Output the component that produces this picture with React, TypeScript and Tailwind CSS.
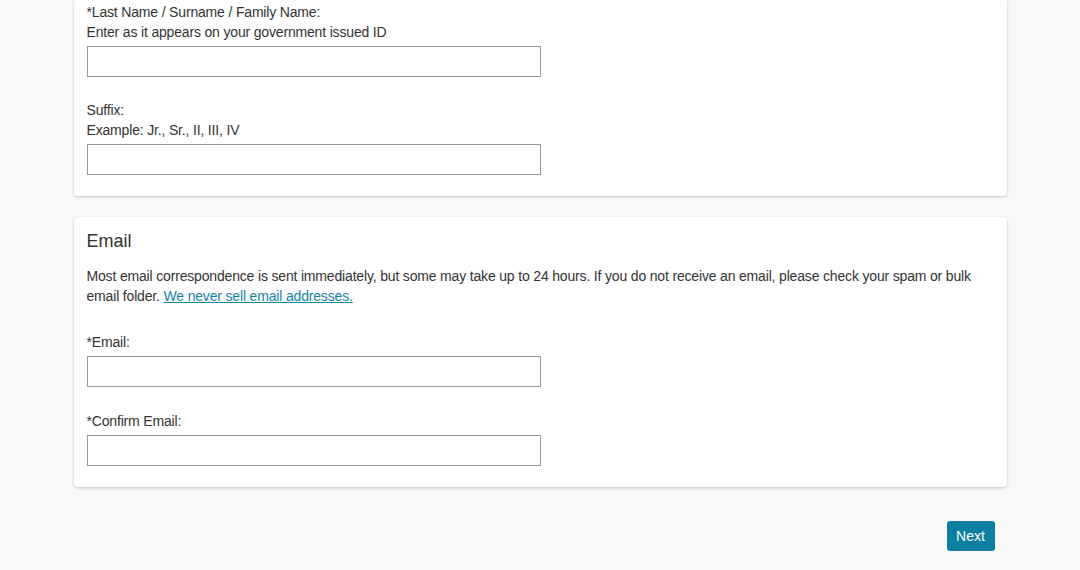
import React from 'react';

const Field: React.FC<{ label: string; hint?: string; className?: string }> = ({ label, hint, className = '' }) => (
  <div className={className}>
    <label className="block leading-5">{label}</label>
    {hint && <p className="leading-5">{hint}</p>}
    <input
      type="text"
      className="mt-1 block h-[31px] w-[454px] border border-[#999] bg-white px-2 text-sm outline-none"
    />
  </div>
);

const App: React.FC = () => {
  return (
    <div
      className="min-h-screen bg-[#f8f8f8] text-[14px] tracking-[-0.17px] text-[#333]"
      style={{ fontFamily: '"Liberation Sans", Arial, sans-serif' }}
    >
      <div className="mx-auto w-[933px]">
        {/* name card, top scrolled off */}
        <section className="rounded-b bg-white px-[13px] pt-[2px] pb-[21px] shadow-[0_1px_3px_rgba(0,0,0,0.22)]">
          <Field
            label="*Last Name / Surname / Family Name:"
            hint="Enter as it appears on your government issued ID"
          />
          <Field className="mt-[23px]" label="Suffix:" hint="Example: Jr., Sr., II, III, IV" />
        </section>

        <section className="mt-[21px] rounded bg-white px-[13px] pt-[13px] pb-[21px] shadow-[0_1px_3px_rgba(0,0,0,0.22)]">
          <h2 className="text-[18px] leading-[22px] tracking-normal">Email</h2>
          <p className="mt-[14px] leading-5">
            Most email correspondence is sent immediately, but some may take up to 24 hours. If you do not receive an
            email, please check your spam or bulk email folder.{' '}
            <a href="#" className="text-[#1583a8] underline">
              We never sell email addresses.
            </a>
          </p>
          <Field className="mt-[26px]" label="*Email:" />
          <Field className="mt-[24px]" label="*Confirm Email:" />
        </section>

        <div className="flex justify-end pr-[12px] pt-[34px] pb-5">
          <button className="h-[30px] w-[48px] rounded-[3px] bg-[#0b7fa1] text-[14px] tracking-normal text-white">
            Next
          </button>
        </div>
      </div>
    </div>
  );
};

export default App;
